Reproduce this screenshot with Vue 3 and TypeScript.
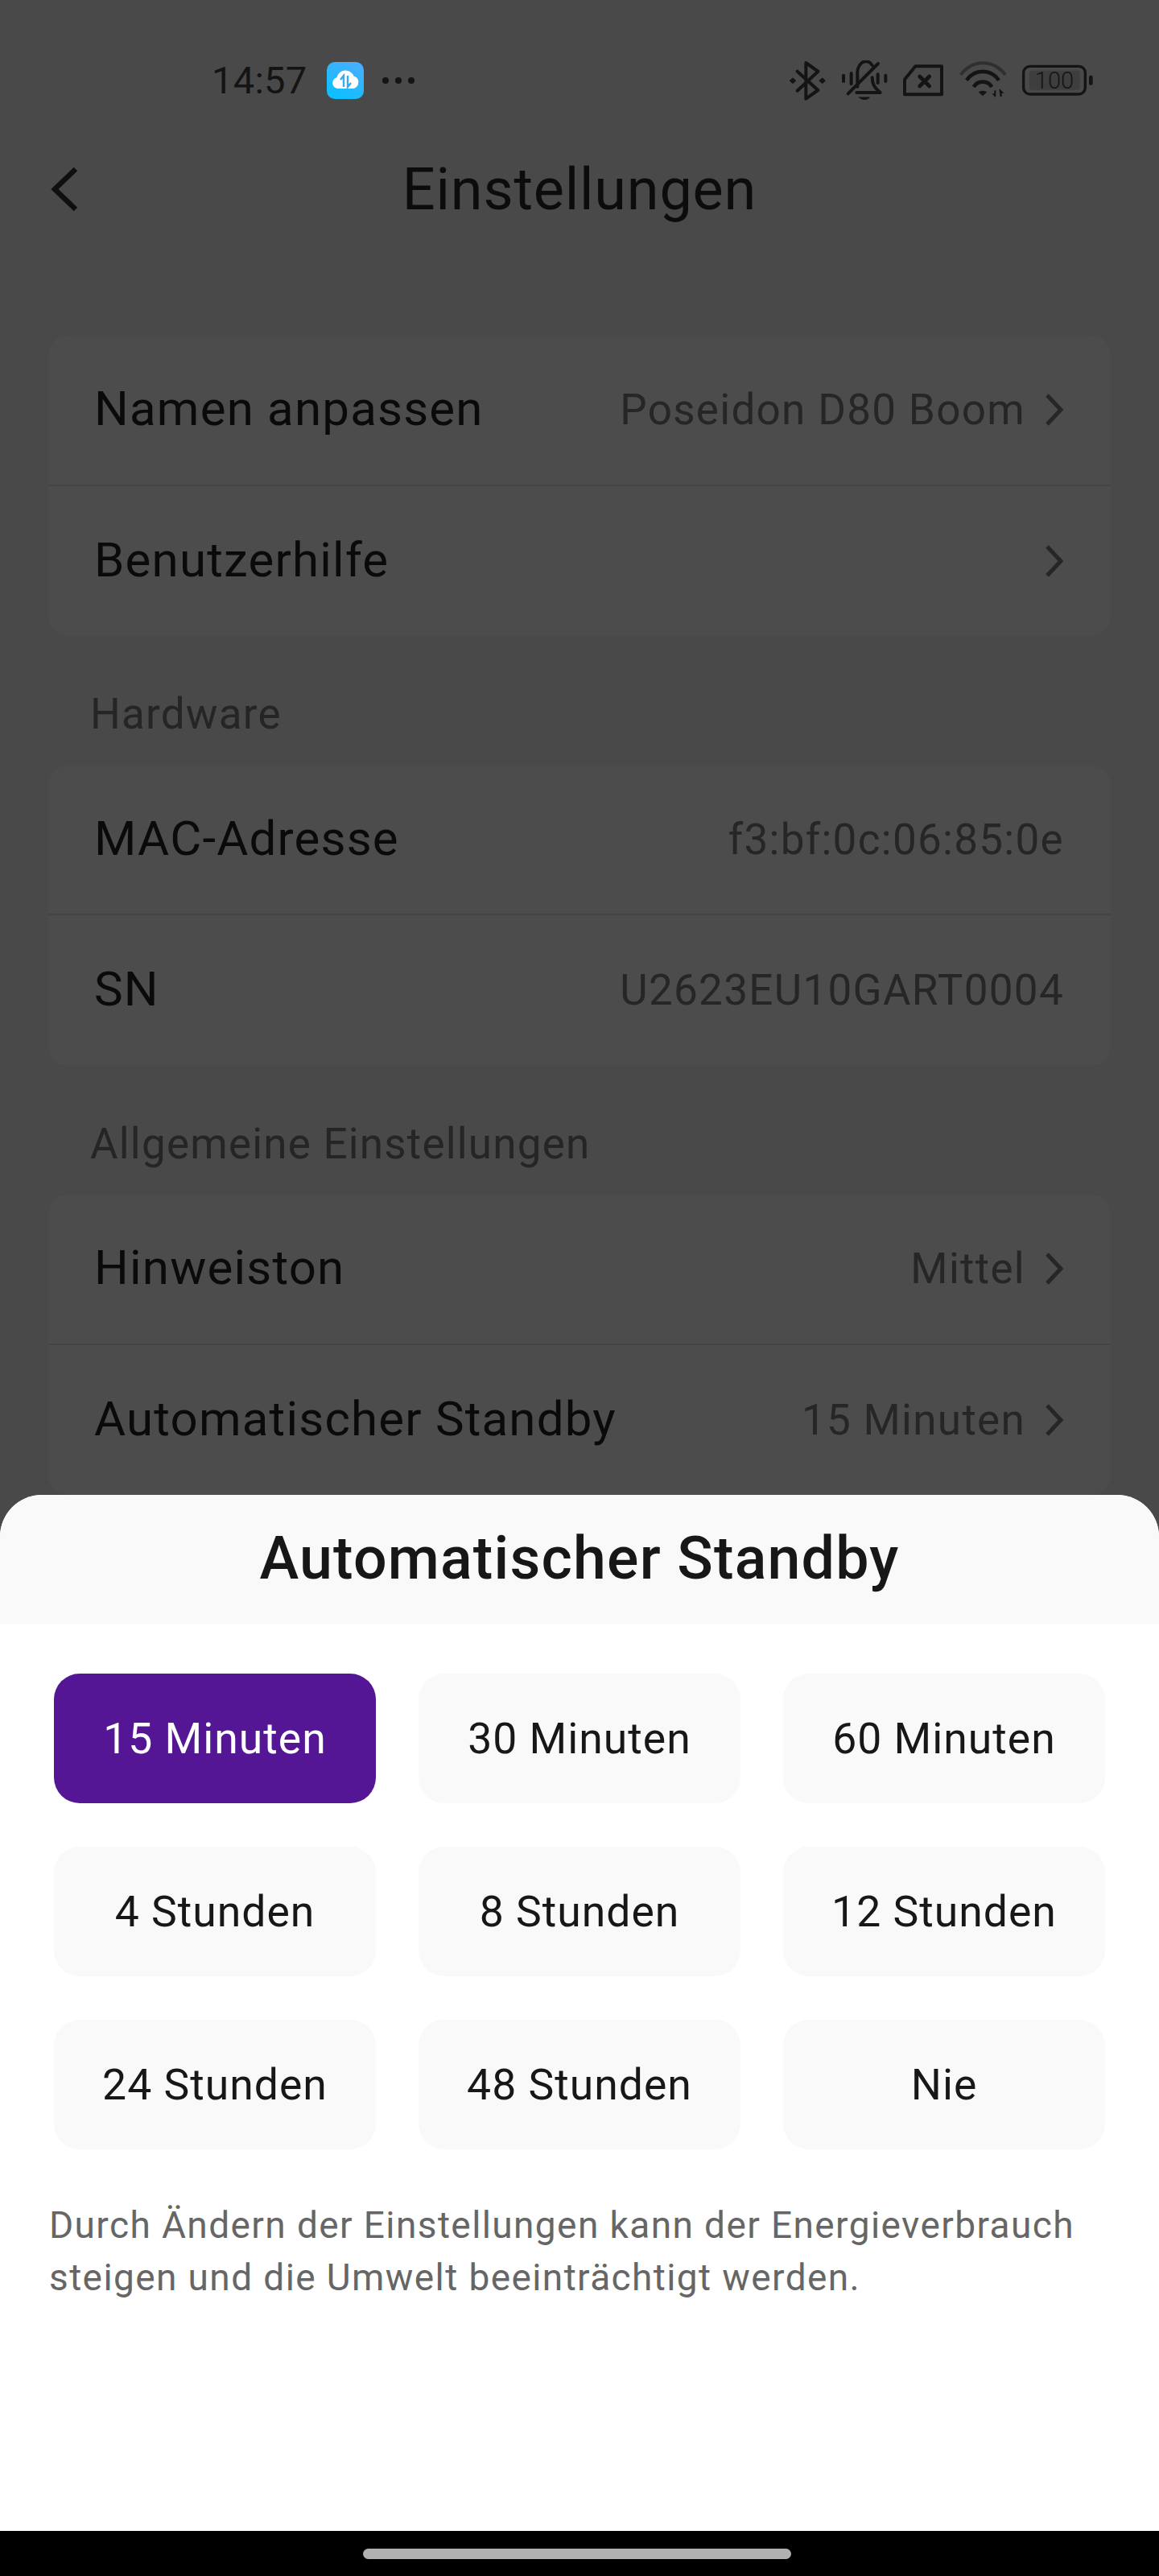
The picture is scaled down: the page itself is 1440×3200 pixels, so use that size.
<script setup lang="ts">
interface Row {
  label: string;
  value?: string;
  chevron?: boolean;
}

const groups: { title?: string; rows: Row[] }[] = [
  {
    rows: [
      { label: "Namen anpassen", value: "Poseidon D80 Boom", chevron: true },
      { label: "Benutzerhilfe", chevron: true },
    ],
  },
  {
    title: "Hardware",
    rows: [
      { label: "MAC-Adresse", value: "f3:bf:0c:06:85:0e" },
      { label: "SN", value: "U2623EU10GART0004" },
    ],
  },
  {
    title: "Allgemeine Einstellungen",
    rows: [
      { label: "Hinweiston", value: "Mittel", chevron: true },
      { label: "Automatischer Standby", value: "15 Minuten", chevron: true },
    ],
  },
];

const options = [
  "15 Minuten",
  "30 Minuten",
  "60 Minuten",
  "4 Stunden",
  "8 Stunden",
  "12 Stunden",
  "24 Stunden",
  "48 Stunden",
  "Nie",
];
const selected = "15 Minuten";
</script>

<template>
  <div class="phone">
    <div class="page">
      <div class="status">
        <span class="clock">14:57</span>
        <svg class="app-icon" viewBox="0 0 46 46">
          <defs>
            <linearGradient id="appgrad" x1="0.8" y1="0" x2="0.3" y2="1">
              <stop offset="0" stop-color="#4aaeff" />
              <stop offset="1" stop-color="#0cc0ff" />
            </linearGradient>
          </defs>
          <rect width="46" height="46" rx="10" fill="url(#appgrad)" />
          <path
            d="M14 33a7 7 0 0 1-1.500-13.800A11 11 0 0 1 33.500 17.500 8 8 0 0 1 33 33z"
            fill="#fff"
          />
          <path d="M21 31V17l-4 5" fill="none" stroke="#39a9ea" stroke-width="2.400" />
          <path d="M26 17v14l4-5" fill="none" stroke="#39a9ea" stroke-width="2.400" />
        </svg>
        <span class="dots"><i /><i /><i /></span>
        <div class="status-right">
          <svg class="si" width="48" height="52" viewBox="120 70 144 156" fill="none" stroke="#141414" stroke-width="12" stroke-linecap="round" stroke-linejoin="round">
            <path d="M155 114 232 184 187 216V82l45 32-77 72" />
            <path d="M128 149l10-9 10 9-10 9z M238 149l10-9 10 9-10 9z" fill="#141414" stroke-width="4" />
          </svg>
          <svg class="si" width="58" height="50" viewBox="314 74 174 150" fill="none" stroke="#141414" stroke-width="12" stroke-linecap="round" stroke-linejoin="round">
            <path d="M323 130v22M480 130v22M352 122v40M451 126v32" />
            <path d="M375 172v-42a32 46 0 0 1 55-38" />
            <path d="M430 138c0 22 6 36 30 56h-88" />
            <path d="M340 198 452 86" />
            <path d="M382 212h38c-6 10-32 10-38 0z" fill="#141414" stroke-width="3" />
          </svg>
          <svg class="si" width="52" height="42" viewBox="544 92 156 124" fill="none" stroke="#141414" stroke-width="12" stroke-linejoin="round" stroke-linecap="round">
            <path d="M593 101h98v105H553v-56z" />
            <path d="M609 139l36 36M645 139l-36 36" stroke-width="14" />
          </svg>
          <svg class="si" width="60" height="48" viewBox="752 82 180 144" fill="none" stroke-linecap="butt">
            <path d="M760 133a100 100 0 0 1 166 0" stroke="#2f2f2f" stroke-width="12" />
            <path d="M782 153a72 72 0 0 1 120 0" stroke="#141414" stroke-width="14" />
            <path d="M808 178a40 40 0 0 1 68 0" stroke="#141414" stroke-width="14" />
            <path d="M826 197q16-10 32 0l-16 15z" fill="#141414" />
            <path d="M877 203h8v-12h6v24h-4zM903 186h3l16 15h-9v13h-6z" fill="#141414" />
          </svg>
          <svg class="si battery" width="90" height="42" viewBox="984 88 270 122" fill="none">
            <rect x="992" y="96" width="230" height="104" rx="24" stroke="#141414" stroke-width="10" />
            <rect x="1014" y="112" width="188" height="72" rx="8" fill="#3e3e3e" />
            <rect x="1236" y="130" width="14" height="36" rx="6" fill="#141414" />
            <text x="1107" y="180" text-anchor="middle" class="batt-text">100</text>
          </svg>
        </div>
      </div>

      <header class="nav">
        <svg class="back" width="36" height="60" viewBox="0 0 36 60" fill="none" stroke="#0f0f0f" stroke-width="6.500">
          <path d="M32 5 6 30l26 25" />
        </svg>
        <h1>Einstellungen</h1>
      </header>

      <section v-for="(group, g) in groups" :key="g" class="group">
        <p v-if="group.title" class="group-title">{{ group.title }}</p>
        <div class="card">
          <div v-for="row in group.rows" :key="row.label" class="row">
            <span class="label">{{ row.label }}</span>
            <span v-if="row.value" class="value">{{ row.value }}</span>
            <svg v-if="row.chevron" class="chev" width="24" height="42" viewBox="0 0 24 42" fill="none" stroke="#262626" stroke-width="5">
              <path d="M3 3l17 18L3 39" />
            </svg>
          </div>
        </div>
      </section>
    </div>

    <div class="sheet">
      <div class="sheet-head">Automatischer Standby</div>
      <div class="sheet-body">
        <div class="grid">
          <button
            v-for="opt in options"
            :key="opt"
            class="opt"
            :class="{ on: opt === selected }"
          >
            {{ opt }}
          </button>
        </div>
        <p class="note">
          Durch Ändern der Einstellungen kann der Energieverbrauch<br />
          steigen und die Umwelt beeinträchtigt werden.
        </p>
      </div>
      <div class="navbar"><span class="pill" /></div>
    </div>
  </div>
</template>

<style>
body {
  margin: 0;
  background: #4a4a4a;
}
</style>

<style scoped>
.phone {
  position: relative;
  width: 1440px;
  height: 3200px;
  overflow: hidden;
  background: #494949;
  font-family: Roboto, "Noto Sans", sans-serif;
}

.status {
  display: flex;
  align-items: center;
  height: 48px;
  padding: 76px 60px 0 263px;
}
.clock {
  font-size: 47px;
  line-height: 48px;
  letter-spacing: 0.3px;
  color: #141414;
}
.app-icon {
  width: 46px;
  height: 46px;
  margin-left: 24px;
}
.dots {
  display: flex;
  gap: 8px;
  margin-left: 23px;
}
.dots i {
  width: 8px;
  height: 8px;
  border-radius: 50%;
  background: #141414;
}
.status-right {
  display: flex;
  align-items: center;
  gap: 18px;
  margin-left: auto;
  margin-right: 21px;
}
.batt-text {
  font-family: Roboto, sans-serif;
  font-size: 87px;
  font-weight: 300;
  fill: #141414;
}

.nav {
  position: relative;
  height: 110px;
  margin-top: 56px;
  margin-bottom: 127px;
  display: flex;
  align-items: center;
  justify-content: center;
}
.nav h1 {
  margin: 0;
  font-size: 72px;
  font-weight: 400;
  letter-spacing: 0.8px;
  color: #0c0c0c;
}
.back {
  position: absolute;
  left: 62px;
  top: 25px;
}

.group {
  padding: 0 60px;
}
.group-title {
  margin: 0;
  height: 160.500px;
  padding: 67px 0 0 52px;
  box-sizing: border-box;
  font-size: 53px;
  line-height: 60px;
  letter-spacing: 1.200px;
  color: #252525;
}
.card {
  background: #4c4c4c;
  border-radius: 24px;
}
.row {
  display: flex;
  align-items: center;
  height: 186.500px;
  padding: 0 58px 0 57px;
  box-sizing: border-box;
  border-bottom: 2px solid #444;
}
.row:last-child {
  border-bottom: 0;
}
.label {
  flex: 1;
  margin-bottom: 3px;
  font-size: 60px;
  letter-spacing: 1.200px;
  color: #0a0a0a;
}
.value {
  font-size: 53px;
  letter-spacing: 1.300px;
  color: #262626;
}
.chev {
  margin-left: 24px;
}

.sheet {
  position: absolute;
  left: 0;
  right: 0;
  top: 1857px;
  bottom: 0;
  display: flex;
  flex-direction: column;
  background: #fff;
  border-radius: 52px 52px 0 0;
  overflow: hidden;
}
.sheet-head {
  height: 161px;
  line-height: 158px;
  background: #f9f9f9;
  text-align: center;
  font-size: 73.500px;
  font-weight: 500;
  letter-spacing: 1.200px;
  color: #171717;
}
.sheet-body {
  flex: 1;
  padding: 61px 60px 0 61px;
}
.grid {
  display: grid;
  grid-template-columns: repeat(3, 400px);
  column-gap: 53px;
  row-gap: 54px;
  justify-content: center;
  margin-left: -1px;
}
.opt {
  height: 161px;
  border: 0;
  border-radius: 32px;
  background: #f9f9f9;
  font-family: inherit;
  font-size: 53.500px;
  letter-spacing: 1px;
  color: #171717;
}
.opt.on {
  background: #541695;
  color: #fff;
}
.note {
  margin: 62px 0 0;
  font-size: 46px;
  line-height: 65px;
  letter-spacing: 1.400px;
  color: #666;
}
.navbar {
  flex: none;
  height: 56px;
  background: #000;
  display: flex;
  justify-content: center;
  padding: 22px 7px 0 0;
  box-sizing: border-box;
}
.pill {
  width: 532px;
  height: 13px;
  border-radius: 7px;
  background: #b0b0b0;
}
</style>
